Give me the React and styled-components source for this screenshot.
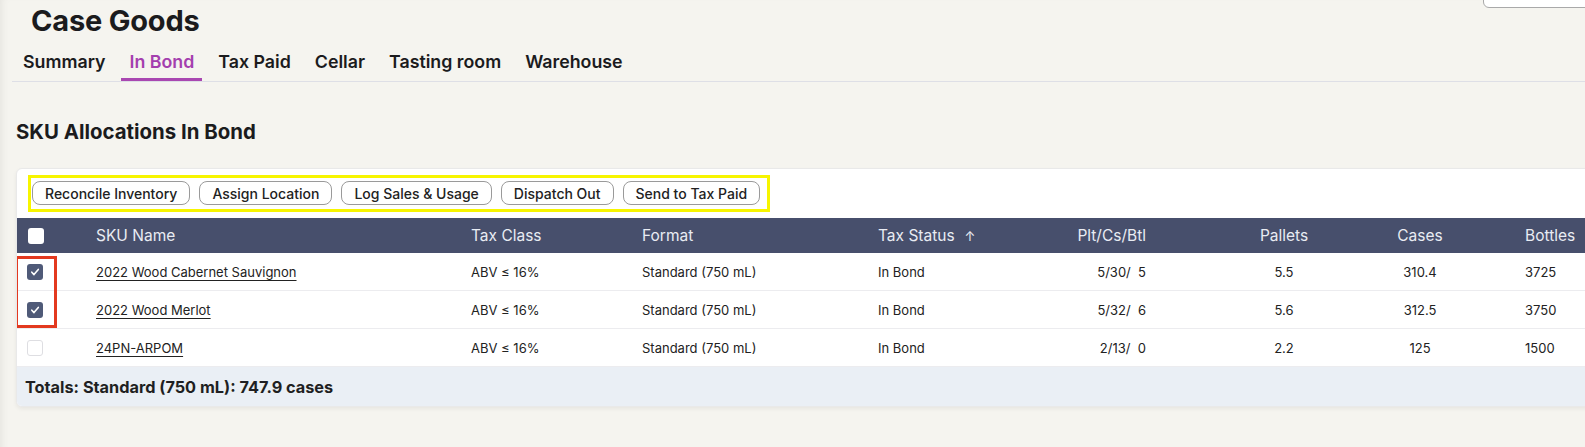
import React from "react";
import styled, { createGlobalStyle } from "styled-components";

const GlobalStyle = createGlobalStyle`
  html, body {
    margin: 0;
    padding: 0;
    background: #f5f4ef;
    overflow: hidden;
  }
  body {
    font-family: Inter, "Noto Sans", "Liberation Sans", sans-serif;
    color: #1d1d1f;
  }
`;

const tabs = ["Summary", "In Bond", "Tax Paid", "Cellar", "Tasting room", "Warehouse"];
const actions = ["Reconcile Inventory", "Assign Location", "Log Sales & Usage", "Dispatch Out", "Send to Tax Paid"];

// width, align, padding for each column
const columns = [
  { key: "check", label: "", width: 64, align: "left", pad: "0 0 0 10px" },
  { key: "name", label: "SKU Name", width: 375, align: "left", pad: "0 0 0 15px" },
  { key: "taxClass", label: "Tax Class", width: 171, align: "left", pad: "0 0 0 15px" },
  { key: "format", label: "Format", width: 236, align: "left", pad: "0 0 0 15px" },
  { key: "status", label: "Tax Status", width: 137, align: "left", pad: "0 0 0 15px", sorted: true },
  { key: "pcb", label: "Plt/Cs/Btl", width: 210, align: "right", pad: "0 64px 0 0" },
  { key: "pallets", label: "Pallets", width: 148, align: "center", pad: "0" },
  { key: "cases", label: "Cases", width: 124, align: "center", pad: "0" },
  { key: "bottles", label: "Bottles", width: 160, align: "left", pad: "0 0 0 43px" },
];

const rows = [
  { checked: true, name: "2022 Wood Cabernet Sauvignon", taxClass: "ABV ≤ 16%", format: "Standard (750 mL)", status: "In Bond", pcb: "5/30/\u00a0 5", pallets: "5.5", cases: "310.4", bottles: "3725" },
  { checked: true, name: "2022 Wood Merlot", taxClass: "ABV ≤ 16%", format: "Standard (750 mL)", status: "In Bond", pcb: "5/32/\u00a0 6", pallets: "5.6", cases: "312.5", bottles: "3750" },
  { checked: false, name: "24PN-ARPOM", taxClass: "ABV ≤ 16%", format: "Standard (750 mL)", status: "In Bond", pcb: "2/13/\u00a0 0", pallets: "2.2", cases: "125", bottles: "1500" },
];

const gridTemplate = columns.map((c) => `${c.width}px`).join(" ");

const Page = styled.div`
  min-height: 447px;
  padding: 3px 0 0 16px;
  box-shadow: inset 7px 0 8px -6px rgba(0, 0, 0, 0.08);
`;

const TitleRow = styled.div`
  display: flex;
  justify-content: space-between;
  align-items: flex-start;
`;

const Title = styled.h1`
  margin: 0 0 0 15px;
  font-size: 29px;
  line-height: 35px;
  font-weight: 700;
  letter-spacing: -0.2px;
  color: #1b1b1d;
`;

const SearchBox = styled.div`
  width: 140px;
  height: 40px;
  margin: -37px -40px 0 0;
  background: #fff;
  border: 1px solid #a9a9a9;
  border-radius: 6px;
`;

const TabBar = styled.nav`
  display: flex;
  gap: 8px;
  margin: 13px 0 0 -4px;
  padding-left: 3px;
  border-bottom: 1px solid #dedfe6;
`;

const Tab = styled.div`
  padding: 0 8px 5px;
  font-size: 17.8px;
  line-height: 22px;
  font-weight: 600;
  color: ${(p) => (p.active ? "#a43fae" : "#1b1b1d")};
  border-bottom: 3px solid ${(p) => (p.active ? "#a947b1" : "transparent")};
`;

const SectionTitle = styled.h2`
  margin: 38px 0 0;
  font-size: 20.4px;
  line-height: 24px;
  font-weight: 700;
  color: #1b1b1d;
`;

const Card = styled.section`
  margin-top: 24px;
  width: 1640px;
  background: #fff;
  border: 1px solid #e9e9e9;
  border-radius: 6px;
  box-shadow: 0 2px 4px rgba(0, 0, 0, 0.06);
  overflow: hidden;
`;

const Toolbar = styled.div`
  padding: 6px 0 6px 11px;
`;

const ActionGroup = styled.div`
  display: inline-flex;
  gap: 9px;
  padding: 3px 7px 4px 1px;
  border: 3px solid #f7f500;
`;

const ActionButton = styled.button`
  height: 24px;
  padding: 0 12px;
  font-family: inherit;
  font-size: 14px;
  font-weight: 500;
  color: #222;
  background: #fff;
  border: 1px solid #9a9a9a;
  border-radius: 8px;
  white-space: nowrap;
`;

const Table = styled.div`
  position: relative;
`;

const Row = styled.div`
  display: grid;
  grid-template-columns: ${gridTemplate};
  align-items: center;
  height: ${(p) => (p.head ? "35px" : "38px")};
  box-sizing: border-box;
  background: ${(p) => (p.head ? "#474f6c" : "#fff")};
  border-bottom: ${(p) => (p.head ? "none" : "1px solid #ececef")};
`;

const Cell = styled.div`
  padding: ${(p) => p.pad};
  font-size: ${(p) => (p.head ? "15.5px" : "13px")};
  color: ${(p) => (p.head ? "#e9ecf3" : "#222")};
  white-space: nowrap;
  display: flex;
  align-items: center;
  justify-content: ${(p) => (p.align === "right" ? "flex-end" : p.align === "center" ? "center" : "flex-start")};
`;

const SkuLink = styled.span`
  text-decoration: underline;
  text-underline-offset: 3px;
  text-decoration-thickness: 1px;
`;

const SortArrow = styled.span`
  margin-left: 10px;
  font-size: 13px;
`;

const Check = styled.span`
  width: 16px;
  height: 16px;
  box-sizing: border-box;
  border-radius: 3px;
  display: inline-flex;
  align-items: center;
  justify-content: center;
  margin-left: ${(p) => (p.head ? "1px" : "0")};
  background: ${(p) => (p.checked ? "#4f5a78" : "#fff")};
  border: ${(p) => (p.checked || p.head ? "none" : "1px solid #dedee2")};
`;

const Highlight = styled.div`
  position: absolute;
  left: -2px;
  top: 38px;
  width: 42px;
  height: 72px;
  box-sizing: border-box;
  border: 3px solid #e3391f;
  pointer-events: none;
`;

const Totals = styled.div`
  height: 39px;
  display: flex;
  align-items: center;
  padding-left: 8px;
  background: #eaeff5;
  font-size: 16.3px;
  font-weight: 700;
  color: #1f1f22;
`;

const CheckBox = ({ checked, head }) => (
  <Check checked={checked} head={head}>
    {checked && (
      <svg width="10" height="10" viewBox="0 0 10 10">
        <path d="M1.8 5.2 L4 7.6 L8.3 2.4" fill="none" stroke="#fff" strokeWidth="1.6" strokeLinecap="round" strokeLinejoin="round" />
      </svg>
    )}
  </Check>
);

export default function App() {
  return (
    <>
      <GlobalStyle />
      <Page>
        <TitleRow>
          <Title>Case Goods</Title>
          <SearchBox />
        </TitleRow>
        <TabBar>
          {tabs.map((t) => (
            <Tab key={t} active={t === "In Bond"}>
              {t}
            </Tab>
          ))}
        </TabBar>
        <SectionTitle>SKU Allocations In Bond</SectionTitle>
        <Card>
          <Toolbar>
            <ActionGroup>
              {actions.map((a) => (
                <ActionButton key={a}>{a}</ActionButton>
              ))}
            </ActionGroup>
          </Toolbar>
          <Table>
            <Row head>
              {columns.map((c) => (
                <Cell key={c.key} head pad={c.pad} align={c.align}>
                  {c.key === "check" ? <CheckBox head /> : c.label}
                  {c.sorted && <SortArrow>↑</SortArrow>}
                </Cell>
              ))}
            </Row>
            {rows.map((r) => (
              <Row key={r.name}>
                {columns.map((c) => (
                  <Cell key={c.key} pad={c.pad} align={c.align}>
                    {c.key === "check" ? (
                      <CheckBox checked={r.checked} />
                    ) : c.key === "name" ? (
                      <SkuLink>{r.name}</SkuLink>
                    ) : (
                      r[c.key]
                    )}
                  </Cell>
                ))}
              </Row>
            ))}
            <Highlight />
          </Table>
          <Totals>Totals: Standard (750 mL): 747.9 cases</Totals>
        </Card>
      </Page>
    </>
  );
}
